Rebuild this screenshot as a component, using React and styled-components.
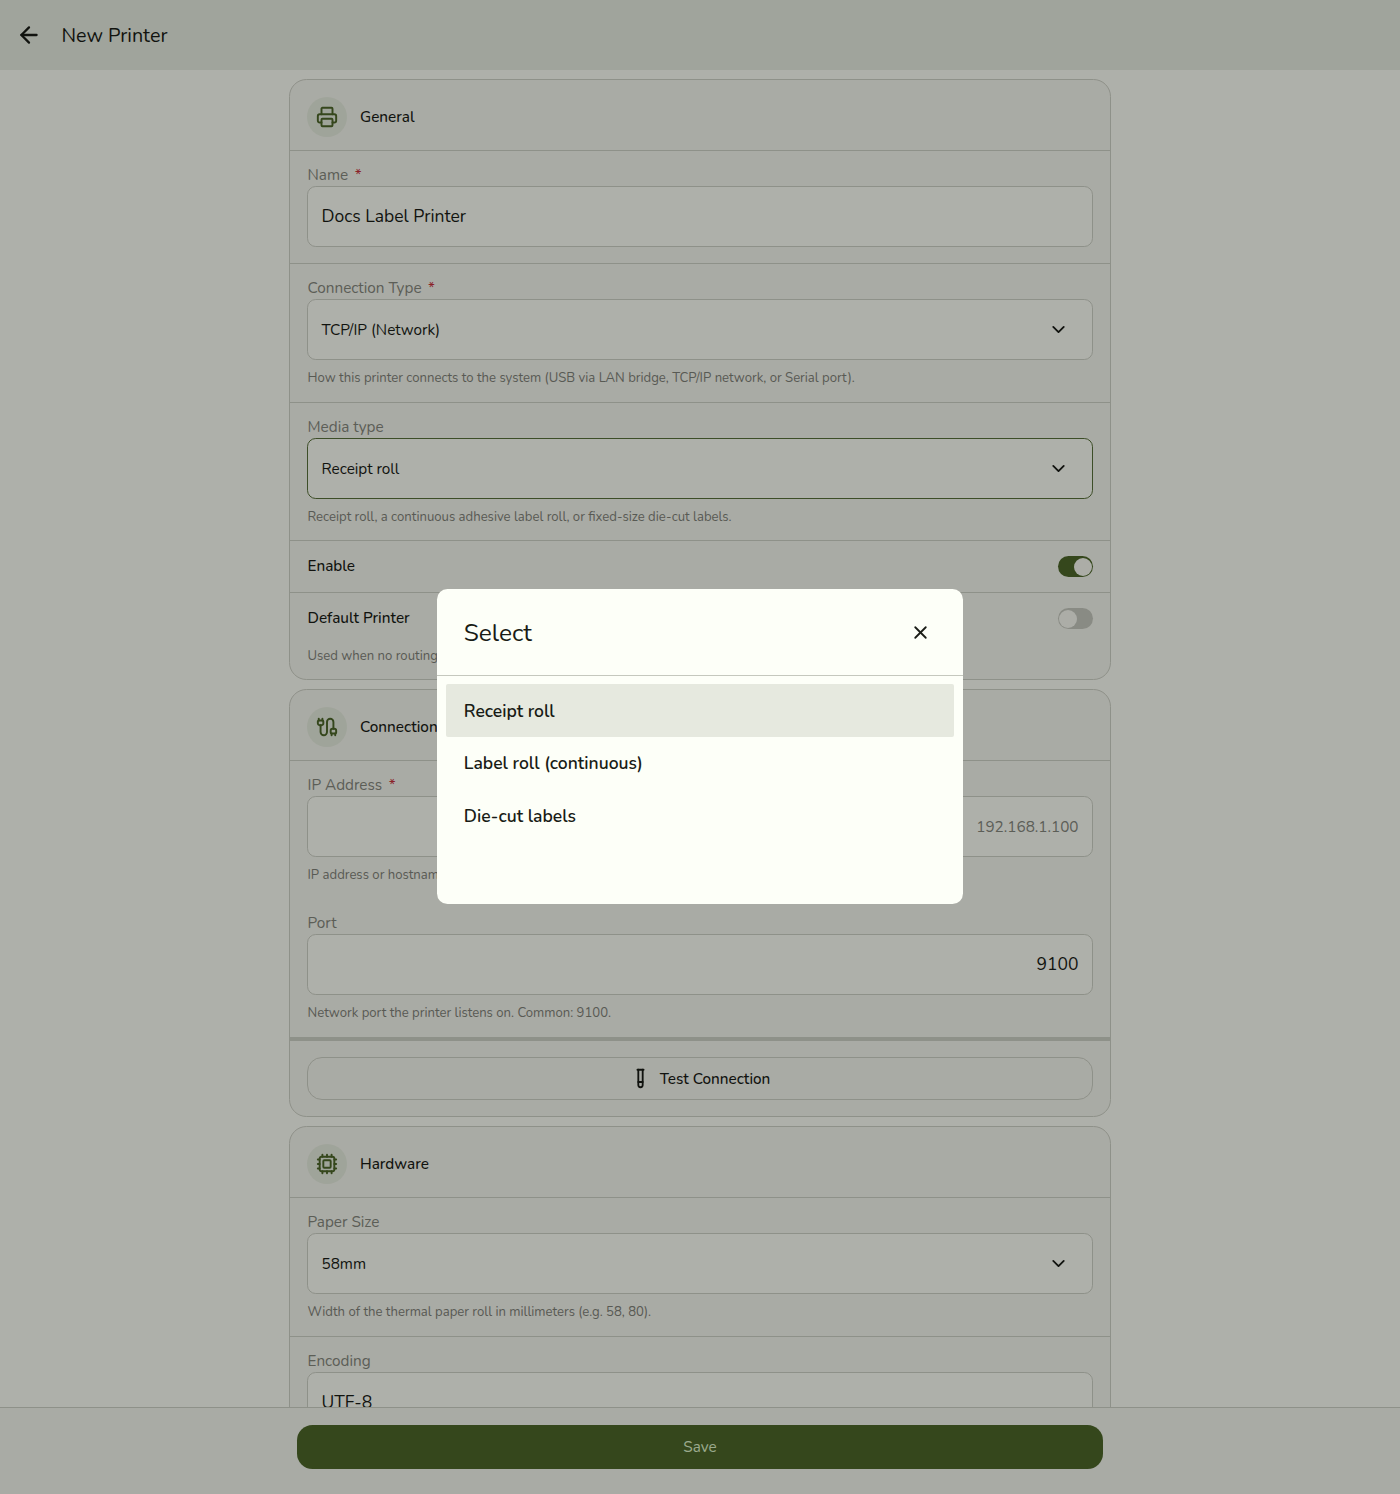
import React from "react";
import styled, { createGlobalStyle } from "styled-components";
import { ArrowLeft, Cable, ChevronDown, Cpu, Printer, TestTube, X } from "lucide-react";

const c = {
  page: "#fafcf4",
  surface: "#f3f5ec",
  bar: "#e6ebe0",
  line: "#ccd0c5",
  ink: "#191c16",
  label: "#84877d",
  hint: "#7f8279",
  primary: "#4c6629",
  tint: "#e4ebdd",
};

const GlobalStyle = createGlobalStyle`
  * { box-sizing: border-box; }
  body {
    margin: 0;
    overflow: hidden;
    background: ${c.page};
    color: ${c.ink};
    font-family: Nunito, Lato, "Open Sans", sans-serif;
    font-size: 15.3px;
  }
  button { font: inherit; color: inherit; margin: 0; padding: 0; background: none; border: 0; }
`;

const Screen = styled.div`
  height: 1494px;
  display: flex;
  flex-direction: column;
  overflow: hidden;
`;

const AppBar = styled.header`
  flex: none;
  height: 70px;
  display: flex;
  align-items: center;
  gap: 20px;
  padding-left: 15.5px;
  background: ${c.bar};
  h1 { margin: 0; padding-top: 1px; font-size: 19.7px; font-weight: 400; line-height: 28px; }
`;

const BackButton = styled.button`
  display: flex;
`;

const Scroller = styled.main`
  flex: 1;
  min-height: 0;
  overflow: hidden;
  display: flex;
  flex-direction: column;
  align-items: center;
  gap: 9px;
  padding-top: 9px;
`;

const Card = styled.section`
  flex: none;
  width: 822px;
  border: 1px solid ${c.line};
  border-radius: 17.5px;
  background: ${c.surface};
`;

const CardHead = styled.div`
  height: 71px;
  display: flex;
  align-items: center;
  gap: 13px;
  padding: 3px 17px 0;
  border-bottom: 1px solid ${c.line};
  h2 { margin: 0; font-size: 15.3px; font-weight: 500; line-height: 22px; }
`;

const IconBadge = styled.span`
  width: 40px;
  height: 40px;
  border-radius: 50%;
  display: grid;
  place-items: center;
  background: ${c.tint};
  color: ${c.primary};
`;

const FieldBlock = styled.div`
  padding: 13px 17px ${(p) => p.$bottom ?? 15}px;
  border-bottom: ${(p) => p.$divider ?? 1}px solid ${c.line};
`;

const Label = styled.label`
  display: block;
  height: 22px;
  padding-left: 0.5px;
  line-height: 22px;
  color: ${c.label};
`;

const Required = styled.span`
  margin-left: 6.5px;
  color: #c8323a;
`;

const Control = styled.div`
  height: 61px;
  display: flex;
  align-items: center;
  justify-content: ${(p) => (p.$end ? "flex-end" : "space-between")};
  padding: 0 ${(p) => (p.$select ? "23px" : "13.5px")} 0 13.5px;
  border: 1px solid ${(p) => (p.$active ? "#58703a" : c.line)};
  border-radius: 8.75px;
  background: ${c.page};
`;

const InputText = styled.span`
  padding-bottom: 2px;
  font-size: 17.5px;
`;

const Placeholder = styled.span`
  color: ${c.label};
`;

const SelectText = styled.span`
  font-weight: ${(p) => p.$weight ?? 400};
`;

const Hint = styled.p`
  margin: ${(p) => p.$top ?? 9}px 0 0;
  padding-left: 0.5px;
  font-size: 13.125px;
  line-height: 18px;
  color: ${c.hint};
  white-space: nowrap;
`;

const ToggleBlock = styled.div`
  height: ${(p) => p.$height}px;
  padding: 15px 17px 0;
  border-bottom: ${(p) => (p.$last ? 0 : 1)}px solid ${c.line};
`;

const ToggleRow = styled.div`
  display: flex;
  justify-content: space-between;
  align-items: center;
  height: 21px;
`;

const ToggleLabel = styled.span`
  padding: 0 0 1px 0.5px;
  font-weight: 500;
`;

const Switch = styled.span`
  width: 35px;
  height: 21px;
  display: flex;
  align-items: center;
  justify-content: ${(p) => (p.$on ? "flex-end" : "flex-start")};
  padding: 0 1px;
  border-radius: 11px;
  background: ${(p) => (p.$on ? c.primary : "#c5c8be")};
  &::after {
    content: "";
    width: 18px;
    height: 18px;
    border-radius: 50%;
    background: #f6f8f0;
  }
`;

const ActionBlock = styled.div`
  padding: 16px 17px;
`;

const OutlineButton = styled.button`
  width: 100%;
  height: 43px;
  display: flex;
  align-items: center;
  justify-content: center;
  gap: 9px;
  border: 1px solid ${c.line};
  border-radius: 15px;
  font-weight: 500;
`;

const Footer = styled.footer`
  flex: none;
  height: 87px;
  display: flex;
  justify-content: center;
  padding-top: 17px;
  border-top: 1px solid ${c.line};
  background: ${c.surface};
`;

const SaveButton = styled.button`
  width: 806px;
  height: 44px;
  border-radius: 15.5px;
  background: ${c.primary};
  color: #dff3cb;
`;

const Backdrop = styled.div`
  position: fixed;
  inset: 0;
  display: grid;
  place-items: center;
  padding-bottom: 1px;
  background: rgba(0, 0, 0, 0.3);
`;

const Dialog = styled.div`
  width: 526px;
  height: 315px;
  border-radius: 10.5px;
  background: #fdfff8;
`;

const DialogHead = styled.div`
  height: 87px;
  display: flex;
  align-items: center;
  justify-content: space-between;
  padding: 1px 32.5px 0 26.75px;
  border-bottom: 1px solid #c5c8be;
  h3 { margin: 0; font-size: 24.5px; font-weight: 400; line-height: 32px; }
`;

const CloseButton = styled.button`
  display: flex;
`;

const Options = styled.div`
  padding: 8.25px 9px;
`;

const Option = styled.div`
  height: 52.5px;
  display: flex;
  align-items: center;
  padding-left: 17.75px;
  border-radius: 2px;
  font-size: 17.5px;
  font-weight: 600;
  background: ${(p) => (p.$selected ? "#e6e9df" : "transparent")};
`;

function Section({ icon: Icon, title, children }) {
  return (
    <Card>
      <CardHead>
        <IconBadge>
          <Icon size={22} strokeWidth={2.1} />
        </IconBadge>
        <h2>{title}</h2>
      </CardHead>
      {children}
    </Card>
  );
}

function Field({ label, required, hint, divider, bottom, children, ...control }) {
  return (
    <FieldBlock $divider={divider} $bottom={bottom}>
      <Label>
        {label}
        {required && <Required>*</Required>}
      </Label>
      <Control {...control}>{children}</Control>
      {hint && <Hint>{hint}</Hint>}
    </FieldBlock>
  );
}

function SelectField({ value, ...rest }) {
  return (
    <Field $select {...rest}>
      <SelectText>{value}</SelectText>
      <ChevronDown size={21} strokeWidth={2.1} />
    </Field>
  );
}

const options = ["Receipt roll", "Label roll (continuous)", "Die-cut labels"];

export default function App() {
  return (
    <>
      <GlobalStyle />
      <Screen>
        <AppBar>
          <BackButton aria-label="Back">
            <ArrowLeft size={26} strokeWidth={2.1} />
          </BackButton>
          <h1>New Printer</h1>
        </AppBar>
        <Scroller>
          <Section icon={Printer} title="General">
            <Field label="Name" required bottom={16}>
              <InputText>Docs Label Printer</InputText>
            </Field>
            <SelectField
              label="Connection Type"
              required
              value="TCP/IP (Network)"
              hint="How this printer connects to the system (USB via LAN bridge, TCP/IP network, or Serial port)."
            />
            <SelectField
              $active
              label="Media type"
              value="Receipt roll"
              bottom={14}
              hint="Receipt roll, a continuous adhesive label roll, or fixed-size die-cut labels."
            />
            <ToggleBlock $height={52}>
              <ToggleRow>
                <ToggleLabel>Enable</ToggleLabel>
                <Switch $on />
              </ToggleRow>
            </ToggleBlock>
            <ToggleBlock $height={86} $last>
              <ToggleRow>
                <ToggleLabel>Default Printer</ToggleLabel>
                <Switch />
              </ToggleRow>
              <Hint $top={18}>Used when no routing</Hint>
            </ToggleBlock>
          </Section>
          <Section icon={Cable} title="Connection">
            <Field label="IP Address" required divider={0} $end hint="IP address or hostname">
              <Placeholder>192.168.1.100</Placeholder>
            </Field>
            <Field label="Port" divider={4} $end hint="Network port the printer listens on. Common: 9100.">
              <InputText>9100</InputText>
            </Field>
            <ActionBlock>
              <OutlineButton>
                <TestTube size={21} strokeWidth={2.1} />
                Test Connection
              </OutlineButton>
            </ActionBlock>
          </Section>
          <Section icon={Cpu} title="Hardware">
            <SelectField
              label="Paper Size"
              value="58mm"
              hint="Width of the thermal paper roll in millimeters (e.g. 58, 80)."
            />
            <Field label="Encoding">
              <InputText>UTF-8</InputText>
            </Field>
          </Section>
        </Scroller>
        <Footer>
          <SaveButton>Save</SaveButton>
        </Footer>
      </Screen>
      <Backdrop>
        <Dialog role="dialog">
          <DialogHead>
            <h3>Select</h3>
            <CloseButton aria-label="Close">
              <X size={21} strokeWidth={2.1} />
            </CloseButton>
          </DialogHead>
          <Options>
            {options.map((name, i) => (
              <Option key={name} $selected={i === 0}>
                {name}
              </Option>
            ))}
          </Options>
        </Dialog>
      </Backdrop>
    </>
  );
}
